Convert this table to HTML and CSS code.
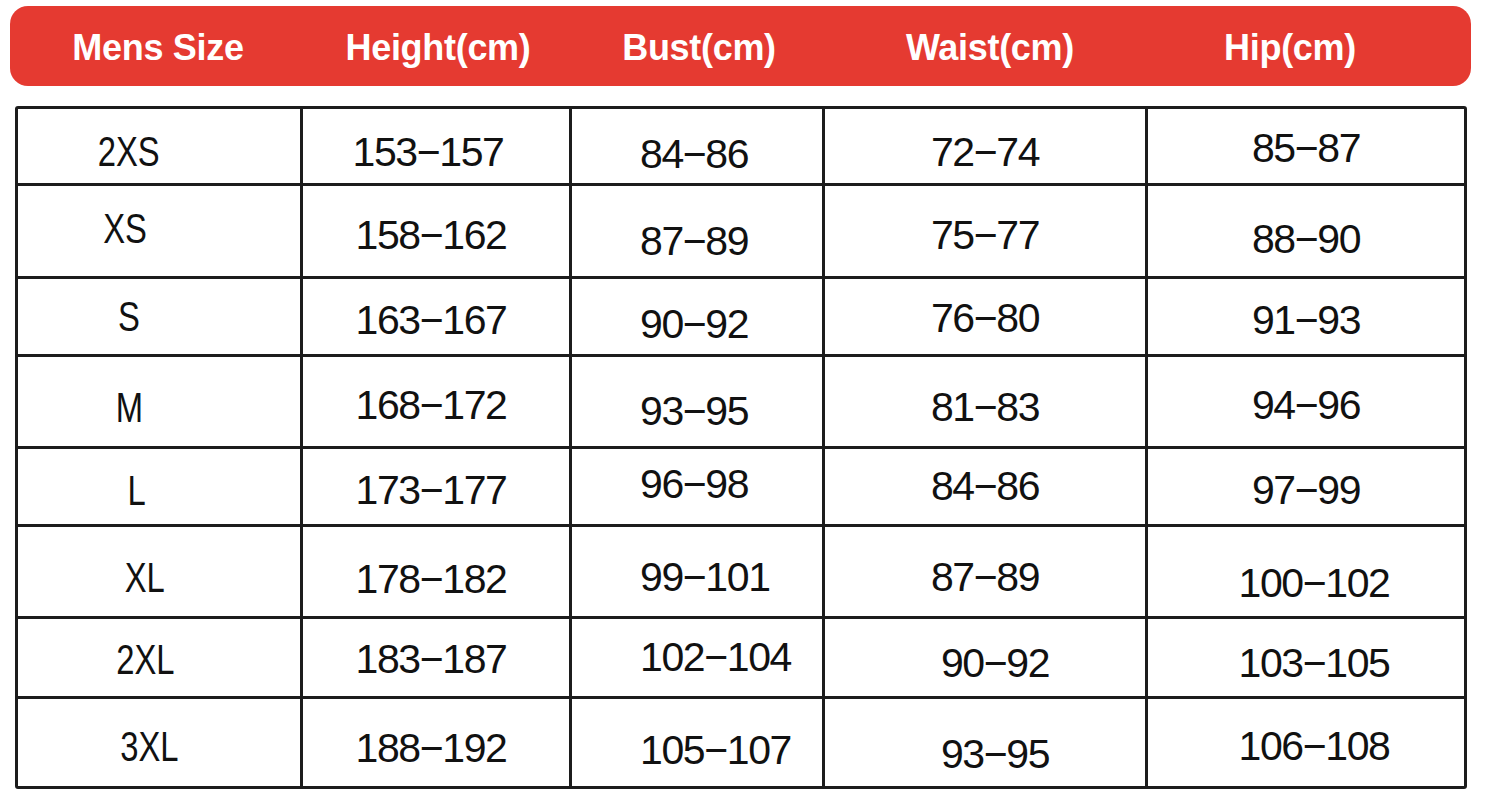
FILE: index.html
```html
<!DOCTYPE html>
<html lang="en">
<head>
<meta charset="utf-8">
<title>Mens Size Chart</title>
<link rel="stylesheet" href="styles.css">
</head>
<body>
<div class="page">
  <div class="head">
    <div class="hcell">Mens Size</div>
    <div class="hcell">Height(cm)</div>
    <div class="hcell">Bust(cm)</div>
    <div class="hcell">Waist(cm)</div>
    <div class="hcell">Hip(cm)</div>
    <div class="hcell"></div>
  </div>

  <div class="chart">
    <div class="cell c1 v6 hm30"><span class="sz">2XS</span></div>
    <div class="cell c2 v6 hm8">153−157</div>
    <div class="cell c3 v8">84−86</div>
    <div class="cell v6">72−74</div>
    <div class="cell v2">85−87</div>

    <div class="cell c1 vm2 hm34"><span class="sz">XS</span></div>
    <div class="cell c2 v4">158−162</div>
    <div class="cell c3 v10">87−89</div>
    <div class="cell v4">75−77</div>
    <div class="cell v8">88−90</div>

    <div class="cell c1 hm30"><span class="sz">S</span></div>
    <div class="cell c2 v4">163−167</div>
    <div class="cell c3 v8">90−92</div>
    <div class="cell v2">76−80</div>
    <div class="cell v4">91−93</div>

    <div class="cell c1 v6 hm30"><span class="sz">M</span></div>
    <div class="cell c2 v4">168−172</div>
    <div class="cell c3 v10">93−95</div>
    <div class="cell v6">81−83</div>
    <div class="cell v4">94−96</div>

    <div class="cell c1 v4 hm22"><span class="sz">L</span></div>
    <div class="cell c2 v4">173−177</div>
    <div class="cell c3 vm2">96−98</div>
    <div class="cell">84−86</div>
    <div class="cell v4">97−99</div>

    <div class="cell c1 v6 hm14"><span class="sz">XL</span></div>
    <div class="cell c2 v8">178−182</div>
    <div class="cell c3 v6">99−101</div>
    <div class="cell v6">87−89</div>
    <div class="cell v12 hp8">100−102</div>

    <div class="cell c1 v2 hm14"><span class="sz">2XL</span></div>
    <div class="cell c2 v2">183−187</div>
    <div class="cell c3">102−104</div>
    <div class="cell v6 hp10">90−92</div>
    <div class="cell v6 hp8">103−105</div>

    <div class="cell c1 v4 hm10"><span class="sz">3XL</span></div>
    <div class="cell c2 v6">188−192</div>
    <div class="cell c3 v8">105−107</div>
    <div class="cell v12 hp10">93−95</div>
    <div class="cell v4 hp8">106−108</div>
  </div>
</div>
</body>
</html>
```

FILE: styles.css
```css
html, body {
  margin: 0;
  padding: 0;
  background: #ffffff;
}

.page {
  padding: 6px 0 0 10px;
  font-family: "Liberation Sans", Arial, sans-serif;
}

.head {
  display: grid;
  grid-template-columns: 296px 264px 258px 324px 276px 1fr;
  align-items: center;
  box-sizing: border-box;
  width: 1461px;
  height: 80px;
  padding-top: 4px;
  background: #e53a31;
  border-radius: 18px;
  color: #ffffff;
  font-weight: 700;
  font-size: 36px;
  letter-spacing: -0.3px;
}

.hcell {
  text-align: center;
  white-space: nowrap;
}

.chart {
  display: grid;
  grid-template-columns: 282px 266px 250px 320px 316px;
  grid-template-rows: 74px 90px 75px 89px 75px 89px 77px 87px;
  gap: 3px;
  width: max-content;
  margin: 20px 0 0 5px;
  background: #1c1c1c;
  border: 3px solid #1c1c1c;
  border-radius: 3px;
}

.cell {
  display: flex;
  align-items: center;
  justify-content: center;
  box-sizing: border-box;
  background: #ffffff;
  color: #111111;
  font-size: 41px;
  letter-spacing: -1.4px;
  white-space: nowrap;
}

.c1 {
  font-size: 42px;
  letter-spacing: 0;
}

.sz {
  display: inline-block;
  transform: scaleX(0.78);
}

.c2 {
  padding-right: 10px;
}

.c3 {
  justify-content: flex-start;
  padding-left: 68px;
}

/* vertical nudges (shift text down/up by half the padding) */
.v2 { padding-top: 4px; }
.v4 { padding-top: 8px; }
.v6 { padding-top: 12px; }
.v8 { padding-top: 16px; }
.v10 { padding-top: 20px; }
.v12 { padding-top: 24px; }
.vm2 { padding-bottom: 4px; }

/* horizontal nudges */
.hm34 { padding-right: 68px; }
.hm30 { padding-right: 60px; }
.hm22 { padding-right: 44px; }
.hm14 { padding-right: 28px; }
.hm10 { padding-right: 20px; }
.hm8 { padding-right: 16px; }
.hp8 { padding-left: 16px; }
.hp10 { padding-left: 20px; }
```
